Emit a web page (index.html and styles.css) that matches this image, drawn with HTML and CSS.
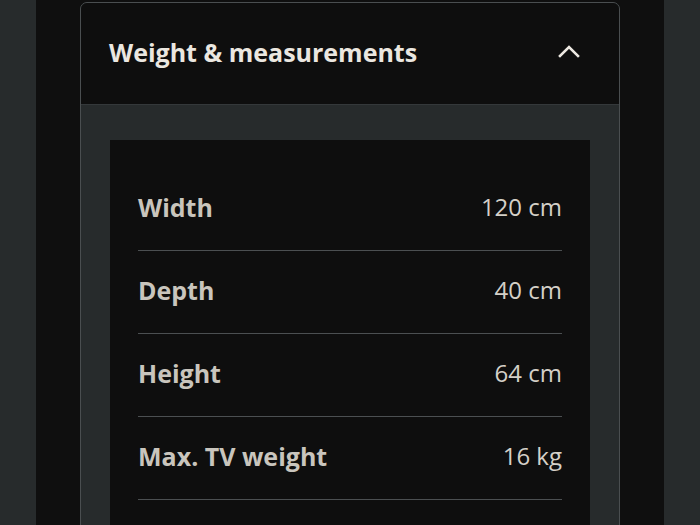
FILE: index.html
```html
<!DOCTYPE html>
<html lang="en">
<head>
    <meta charset="UTF-8">
    <meta name="viewport" content="width=device-width, initial-scale=1.0">
    <title>Weight &amp; measurements</title>
    <link rel="stylesheet" href="styles.css">
</head>
<body>
    <div class="page">
        <div class="accordion">
            <div class="accordion-header">
                <h2>Weight &amp; measurements</h2>
                <svg class="chevron" width="24" height="24" viewBox="0 0 24 24">
                    <path d="M3 16 L12 7 L21 16" fill="none" stroke="#ebe7e0" stroke-width="2.6" stroke-linecap="square"/>
                </svg>
            </div>
            <div class="accordion-body">
                <ul class="specs">
                    <li><span class="label">Width</span><span class="value">120 cm</span></li>
                    <li><span class="label">Depth</span><span class="value">40 cm</span></li>
                    <li><span class="label">Height</span><span class="value">64 cm</span></li>
                    <li><span class="label">Max. TV weight</span><span class="value">16 kg</span></li>
                </ul>
            </div>
        </div>
    </div>
</body>
</html>
```

FILE: styles.css
```css
body {
    font-family: "Open Sans", "Noto Sans", sans-serif;
    background-color: #272b2c;
    margin: 0;
    height: 525px;
    overflow: hidden;
    display: flex;
    justify-content: center;
}

.page {
    background: #0f0f0f;
    width: 540px;
    padding: 2px 44px 0;
}

.accordion {
    border: 1px solid #4a4e50;
    border-radius: 7px 7px 0 0;
    background: #272b2c;
    overflow: hidden;
}

.accordion-header {
    background: #0e0e0e;
    display: flex;
    justify-content: space-between;
    align-items: center;
    padding: 0 38px 4px 28px;
    height: 97px;
    border-bottom: 1px solid #34383a;
}

.accordion-header h2 {
    margin: 0;
    font-size: 25px;
    font-weight: 700;
    color: #ebe7e0;
}

.chevron {
    display: block;
}

.accordion-body {
    padding: 35px 29px 0;
}

.specs {
    list-style: none;
    margin: 0;
    padding: 28px 28px 40px;
    background: #0e0e0e;
}

.specs li {
    display: flex;
    justify-content: space-between;
    align-items: center;
    padding: 24px 0 28px;
    line-height: 30px;
    border-bottom: 1px solid #4b4f51;
}

.label {
    font-size: 25px;
    font-weight: 700;
    color: #c9c5bd;
}

.value {
    font-size: 24px;
    color: #d4d0c8;
}
```
